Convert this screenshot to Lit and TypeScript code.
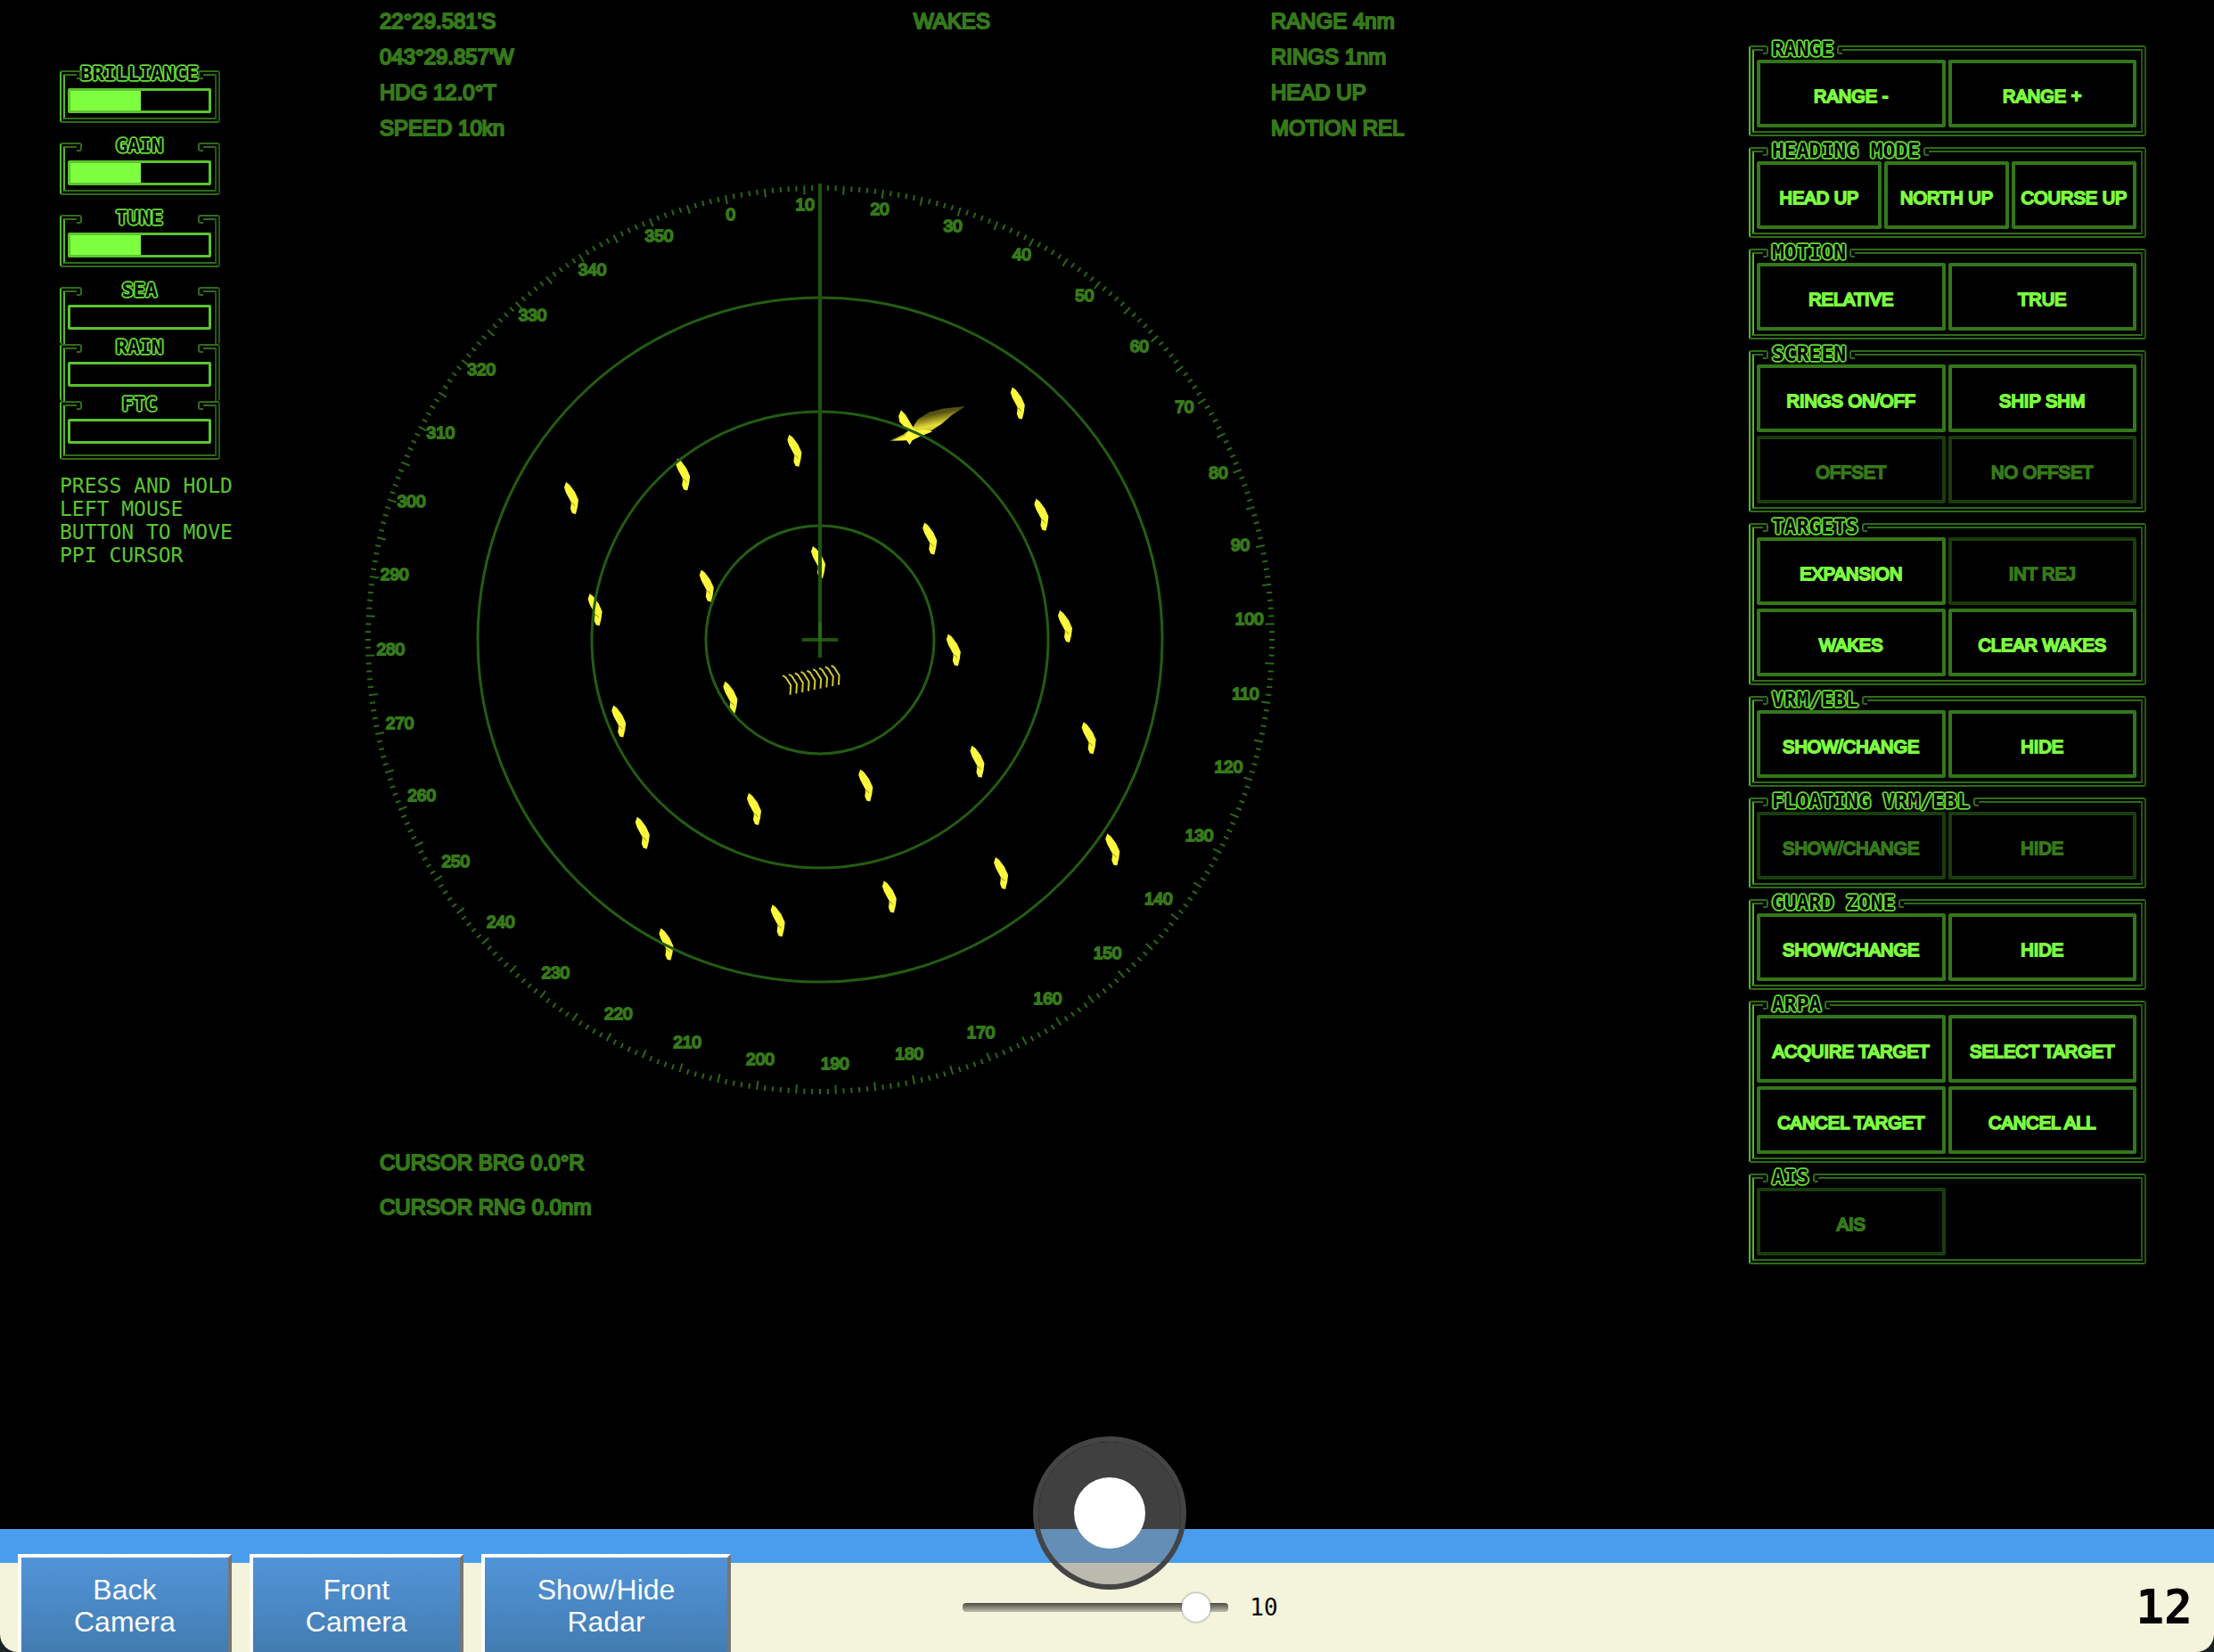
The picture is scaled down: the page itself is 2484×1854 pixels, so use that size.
import { LitElement, html, svg, css } from "lit";
import { customElement, property, state } from "lit/decorators.js";
import { classMap } from "lit/directives/class-map.js";

interface Key {
  label: string;
  off?: boolean;
}

interface KeyGroup {
  title: string;
  columns: 2 | 3;
  keys: Key[];
}

const key = (label: string, off = false): Key => ({ label, off });

const GROUPS: KeyGroup[] = [
  { title: "RANGE", columns: 2, keys: [key("RANGE -"), key("RANGE +")] },
  { title: "HEADING MODE", columns: 3, keys: [key("HEAD UP"), key("NORTH UP"), key("COURSE UP")] },
  { title: "MOTION", columns: 2, keys: [key("RELATIVE"), key("TRUE")] },
  {
    title: "SCREEN",
    columns: 2,
    keys: [key("RINGS ON/OFF"), key("SHIP SHM"), key("OFFSET", true), key("NO OFFSET", true)],
  },
  {
    title: "TARGETS",
    columns: 2,
    keys: [key("EXPANSION"), key("INT REJ", true), key("WAKES"), key("CLEAR WAKES")],
  },
  { title: "VRM/EBL", columns: 2, keys: [key("SHOW/CHANGE"), key("HIDE")] },
  { title: "FLOATING VRM/EBL", columns: 2, keys: [key("SHOW/CHANGE", true), key("HIDE", true)] },
  { title: "GUARD ZONE", columns: 2, keys: [key("SHOW/CHANGE"), key("HIDE")] },
  {
    title: "ARPA",
    columns: 2,
    keys: [key("ACQUIRE TARGET"), key("SELECT TARGET"), key("CANCEL TARGET"), key("CANCEL ALL")],
  },
  { title: "AIS", columns: 2, keys: [key("AIS", true)] },
];

const GAUGES = [
  { title: "BRILLIANCE", value: 51 },
  { title: "GAIN", value: 51 },
  { title: "TUNE", value: 51 },
];

const CLUTTER = [
  { title: "SEA", value: 0 },
  { title: "RAIN", value: 0 },
  { title: "FTC", value: 0 },
];

/* Shared look of the notched double-line frames */
const frameStyles = css`
  :host {
    display: block;
    --bright: #7dff40;
    --mid: #55b82b;
    --dim: #36791a;
    --faint: #2f6c18;
  }
  * {
    box-sizing: border-box;
  }
  .frame {
    margin: 0;
    min-width: 0;
    border: 6px double;
    border-color: var(--faint) #265614 var(--faint) var(--mid);
    border-radius: 3px;
  }
  .title {
    position: relative;
    color: #000;
    font-family: "DejaVu Sans Mono", "Liberation Mono", monospace;
    font-weight: 700;
    line-height: 24px;
    height: 22px;
    white-space: nowrap;
    text-shadow: 1px 0 #6be337, -1px 0 #6be337, 0 1px #6be337, 0 -1px #6be337, 1px 1px #6be337,
      -1px -1px #6be337, 1px -1px #6be337, -1px 1px #6be337, 2px 0 1px #55b82b, -2px 0 1px #55b82b,
      0 2px 1px #55b82b, 0 -2px 1px #55b82b;
  }
  .title::before,
  .title::after {
    content: "";
    position: absolute;
    top: 8px;
    width: 4px;
    height: 6px;
    border: 2px solid var(--faint);
  }
  .title::before {
    left: 0;
    border-left: 0;
    border-radius: 0 3px 3px 0;
  }
  .title::after {
    right: 0;
    border-right: 0;
    border-radius: 3px 0 0 3px;
  }
`;

@customElement("radar-gauge")
class RadarGauge extends LitElement {
  @property() title = "";
  @property({ type: Number }) value = 0;
  @property() join = "";

  static styles = [
    frameStyles,
    css`
      .frame {
        padding: 6px 4px 5px 3px;
      }
      .title {
        width: 142px;
        margin: 0 auto;
        padding: 0;
        font-size: 22px;
        text-align: center;
      }
      .open {
        border-bottom: 0;
        padding-bottom: 16px;
      }
      .last {
        padding-bottom: 12px;
      }
      .bar {
        appearance: none;
        display: block;
        width: 100%;
        height: 28px;
        margin: 0;
        border: 3px solid #5cc42f;
        border-radius: 2px;
        background: linear-gradient(
          to right,
          var(--bright) var(--level),
          #000 var(--level)
        );
      }
      .bar::-webkit-slider-thumb {
        appearance: none;
        width: 2px;
        height: 22px;
        background: transparent;
      }
    `,
  ];

  render() {
    const kind = classMap({ frame: true, open: this.join === "open", last: this.join === "last" });
    return html`<fieldset class=${kind}>
      <legend class="title"><label for="bar">${this.title}</label></legend>
      <input
        id="bar"
        class="bar"
        type="range"
        min="0"
        max="100"
        .value=${String(this.value)}
        style="--level:${this.value}%"
        @input=${(e: Event) => (this.value = Number((e.target as HTMLInputElement).value))}
      />
    </fieldset>`;
  }
}

@customElement("radar-keys")
class RadarKeys extends LitElement {
  @property({ attribute: false }) group!: KeyGroup;

  static styles = [
    frameStyles,
    css`
      .frame {
        padding: 2px 5px 4px 3px;
      }
      .title {
        margin: 0 0 0 7px;
        padding: 0 10px;
        font-size: 23px;
      }
      .keys {
        display: grid;
        gap: 4px 3px;
      }
      .two {
        grid-template-columns: 1fr 1fr;
      }
      .three {
        grid-template-columns: 1fr 1fr 1fr;
      }
      .key {
        height: 76px;
        min-width: 0;
        padding: 6px 0 0;
        border: 4px solid #34771b;
        border-radius: 2px;
        background: #000;
        color: var(--bright);
        font: 20px/24px "Liberation Sans", Arial, sans-serif;
        -webkit-text-stroke: 2px currentColor;
        white-space: nowrap;
        cursor: pointer;
      }
      .key:disabled {
        border-color: #193d0c;
        color: var(--dim);
        cursor: default;
      }
    `,
  ];

  render() {
    const { title, columns, keys } = this.group;
    return html`<fieldset class="frame">
      <legend class="title">${title}</legend>
      <div class=${classMap({ keys: true, two: columns === 2, three: columns === 3 })}>
        ${keys.map(
          (k) => html`<button class="key" type="button" ?disabled=${k.off}>${k.label}</button>`
        )}
      </div>
    </fieldset>`;
  }
}

@customElement("radar-dial")
class RadarDial extends LitElement {
  @property({ type: Number }) heading = 12;

  static styles = css`
    :host {
      display: block;
    }
    .dial {
      display: block;
      width: 100%;
      max-width: 1028px;
    }
    .ring {
      fill: none;
      stroke: #235d11;
      stroke-width: 3;
    }
    .tick {
      stroke: #286a14;
      stroke-width: 2;
    }
    .line {
      stroke: #20540d;
      stroke-width: 4;
    }
    .near {
      stroke: #2a6813;
      stroke-width: 4;
    }
    .mark {
      fill: #36791a;
      stroke: #36791a;
      stroke-width: 2;
      font: 19px "Liberation Sans", Arial, sans-serif;
      text-anchor: middle;
    }
    .echo {
      fill: #fdf83c;
    }
    .fleck {
      fill: none;
      stroke: #a39c1c;
      stroke-width: 1;
    }
    .trace {
      fill: none;
      stroke: #d0c832;
      stroke-width: 6;
    }
  `;

  private point(angle: number, r: number): [number, number] {
    const a = (angle * Math.PI) / 180;
    return [r * Math.sin(a), -r * Math.cos(a)];
  }

  private scale() {
    return Array.from({ length: 360 }, (_, deg) => {
      const a = deg - this.heading;
      const [x1, y1] = this.point(a, 510);
      const [x2, y2] = this.point(a, deg % 5 ? 504 : 500);
      const [tx, ty] = this.point(a, 482);
      return svg`<line class="tick" x1=${x1} y1=${y1} x2=${x2} y2=${y2}></line>${
        deg % 10 ? "" : svg`<text class="mark" x=${tx} y=${ty}>${deg}</text>`
      }`;
    });
  }

  private echoes() {
    const out = [];
    for (let j = -1; j <= 3; j++) {
      for (let i = -2; i <= 2; i++) {
        if ((i === 0 && j === 1) || (i === 1 && j === -1)) continue;
        const [ax, ay] = this.point(90 - this.heading, 128 * i);
        const [bx, by] = this.point(180 - this.heading, 128 * j);
        out.push(svg`<g transform="translate(${ax + bx - 2} ${ay + by - 87})">
          <path class="echo" d="M-6-18L-2-15L4-7L8 2L7 10L5 18L1 17L-1 12L0 5L-6-6L-8-12Z"></path>
          <path class="fleck" d="M-1 6L2 6L4 9"></path>
        </g>`);
      }
    }
    return out;
  }

  render() {
    return html`<svg class="dial" viewBox="-514 -514 1028 1028" role="img" aria-label="Radar display">
      <defs>
        <linearGradient id="wake" x1="0.38" y1="0.32" x2="0.62" y2="0.85">
          <stop offset="0" stop-color="#57520f"></stop>
          <stop offset="0.5" stop-color="#e6dd38"></stop>
          <stop offset="0.7" stop-color="#d2c934"></stop>
          <stop offset="1" stop-color="#57520f"></stop>
        </linearGradient>
      </defs>
      ${this.scale()} ${this.echoes()}
      <g transform="translate(-20 -538) scale(0.357)">
        <path
          fill="url(#wake)"
          d="M275 882L318 862L348 838L364 814L400 791L445 780L512 773L472 800L436 830L405 850L362 866L320 880Z"
        ></path>
        <path class="echo" d="M311 785L325 800L348 838L358 850L384 846L410 852L385 862L362 872L346 880L338 894L328 880L286 881L324 866L334 850L306 822L303 803Z"></path>
      </g>
      <g transform="translate(-140 -158) scale(0.333)">
        ${Array.from(
          { length: 9 },
          (_, n) => svg`<path class="trace" transform="translate(${n * 20.4} ${n * -4.2})" d="M295 595L305 601L322 628L320 660"></path>`
        )}
      </g>
      ${[128, 256, 384].map((r) => svg`<circle class="ring" r=${r}></circle>`)}
      <path class="line" d="M0-512V20M-20 0H20"></path>
      <path class="near" d="M0-20V2"></path>
    </svg>`;
  }
}

@customElement("app-root")
class AppRoot extends LitElement {
  @state() private speed = 10;

  static styles = css`
    :host {
      display: block;
      background: #182322;
      font-family: "Liberation Sans", Arial, sans-serif;
    }
    * {
      box-sizing: border-box;
    }
    .shell {
      display: flex;
      flex-direction: column;
      min-height: 100vh;
      overflow: hidden;
      border-radius: 0 0 20px 20px;
      background: #000;
    }
    .console {
      flex: 1;
      display: grid;
      grid-template-columns: 200px minmax(0, 1fr) 446px;
      padding: 0 76px 0 67px;
    }
    .gauges {
      display: flex;
      flex-direction: column;
      gap: 14px;
      width: 180px;
      padding-top: 71px;
    }
    .stack {
      display: flex;
      flex-direction: column;
    }
    .stack radar-gauge + radar-gauge {
      margin-top: -8px;
    }
    .hint {
      margin: 16px 0 0;
      color: #5cc42f;
      font: 23px/26px "DejaVu Sans Mono", "Liberation Mono", monospace;
      white-space: nowrap;
    }
    .scope {
      padding: 4px 232px 0 139px;
    }
    .readout {
      color: #36791a;
      font-size: 24px;
      line-height: 40px;
      -webkit-text-stroke: 2px currentColor;
      white-space: nowrap;
    }
    .top {
      display: grid;
      grid-template-columns: minmax(0, 1fr) 284px minmax(0, 1fr);
      padding: 0 20px 40px;
    }
    .mode {
      text-align: center;
    }
    .setup {
      padding-left: 216px;
    }
    .cursor {
      padding: 48px 20px 0;
      line-height: 50px;
    }
    .controls {
      display: flex;
      flex-direction: column;
      gap: 4px;
      padding-top: 43px;
    }
    .deck {
      position: relative;
    }
    .horizon {
      height: 38px;
      background: #4a9dec;
    }
    .tray {
      display: grid;
      grid-template-columns: 1fr auto 1fr;
      grid-template-rows: 100px;
      background: #f4f4dc;
    }
    .views {
      display: flex;
      align-items: flex-start;
      gap: 20px;
      margin-top: -10px;
      padding-left: 20px;
    }
    .view {
      padding: 18px 59px;
      border: 4px solid;
      border-color: #fff #767676 #767676 #fff;
      background: linear-gradient(#5294d9, #427cb0);
      color: #fff;
      font: 32px/36px "Liberation Sans", Arial, sans-serif;
      white-space: nowrap;
      cursor: pointer;
    }
    .throttle {
      display: flex;
      align-items: center;
      gap: 24px;
      padding-left: 30px;
      font: 26px/32px "DejaVu Sans Mono", "Liberation Mono", monospace;
      color: #000;
    }
    .slide {
      appearance: none;
      width: 298px;
      height: 32px;
      margin: 0;
      background: transparent;
    }
    .slide::-webkit-slider-runnable-track {
      height: 10px;
      border-radius: 4px;
      background: linear-gradient(#4a4a43, #bdbda9);
    }
    .slide::-webkit-slider-thumb {
      appearance: none;
      width: 32px;
      height: 32px;
      margin-top: -11px;
      border-radius: 50%;
      background: #fff;
      box-shadow: 0 0 2px 1px rgba(60, 80, 100, 0.4);
    }
    .count {
      align-self: center;
      justify-self: end;
      padding-right: 24px;
      color: #000;
      font: 700 53px/60px "DejaVu Sans Mono", "Liberation Mono", monospace;
    }
    .stick {
      position: absolute;
      top: -104px;
      left: 50%;
      width: 172px;
      height: 172px;
      margin-left: -83px;
      padding: 0;
      display: grid;
      place-items: center;
      border: 6px solid #444;
      border-radius: 50%;
      background: rgba(128, 128, 128, 0.5);
      background-clip: padding-box;
    }
    .knob {
      width: 80px;
      height: 80px;
      border-radius: 50%;
      background: #fff;
    }
  `;

  render() {
    return html`<div class="shell">
      <main class="console">
        <section class="gauges">
          ${GAUGES.map((g) => html`<radar-gauge .title=${g.title} .value=${g.value}></radar-gauge>`)}
          <div class="stack">
            ${CLUTTER.map(
              (g, i) => html`<radar-gauge
                .title=${g.title}
                .value=${g.value}
                .join=${i < CLUTTER.length - 1 ? "open" : "last"}
              ></radar-gauge>`
            )}
            <p class="hint">PRESS AND HOLD<br />LEFT MOUSE<br />BUTTON TO MOVE<br />PPI CURSOR</p>
          </div>
        </section>
        <section class="scope">
          <div class="readout top">
            <div>
              <div>22°29.581'S</div>
              <div>043°29.857'W</div>
              <div>HDG 12.0°T</div>
              <div>SPEED 10kn</div>
            </div>
            <div class="mode">WAKES</div>
            <div class="setup">
              <div>RANGE 4nm</div>
              <div>RINGS 1nm</div>
              <div>HEAD UP</div>
              <div>MOTION REL</div>
            </div>
          </div>
          <radar-dial .heading=${12}></radar-dial>
          <div class="readout cursor">
            <div>CURSOR BRG 0.0°R</div>
            <div>CURSOR RNG 0.0nm</div>
          </div>
        </section>
        <section class="controls">
          ${GROUPS.map((g) => html`<radar-keys .group=${g}></radar-keys>`)}
        </section>
      </main>
      <footer class="deck">
        <div class="horizon"></div>
        <div class="tray">
          <nav class="views">
            <button class="view" type="button">Back<br />Camera</button>
            <button class="view" type="button">Front<br />Camera</button>
            <button class="view" type="button">Show/Hide<br />Radar</button>
          </nav>
          <div class="throttle">
            <input
              id="speed"
              class="slide"
              type="range"
              min="-2"
              max="11"
              aria-label="Speed"
              .value=${String(this.speed)}
              @input=${(e: Event) => (this.speed = Number((e.target as HTMLInputElement).value))}
            />
            <output for="speed">${this.speed}</output>
          </div>
          <div class="count">12</div>
        </div>
        <button class="stick" type="button" aria-label="Steering">
          <span class="knob"></span>
        </button>
      </footer>
    </div>`;
  }
}
